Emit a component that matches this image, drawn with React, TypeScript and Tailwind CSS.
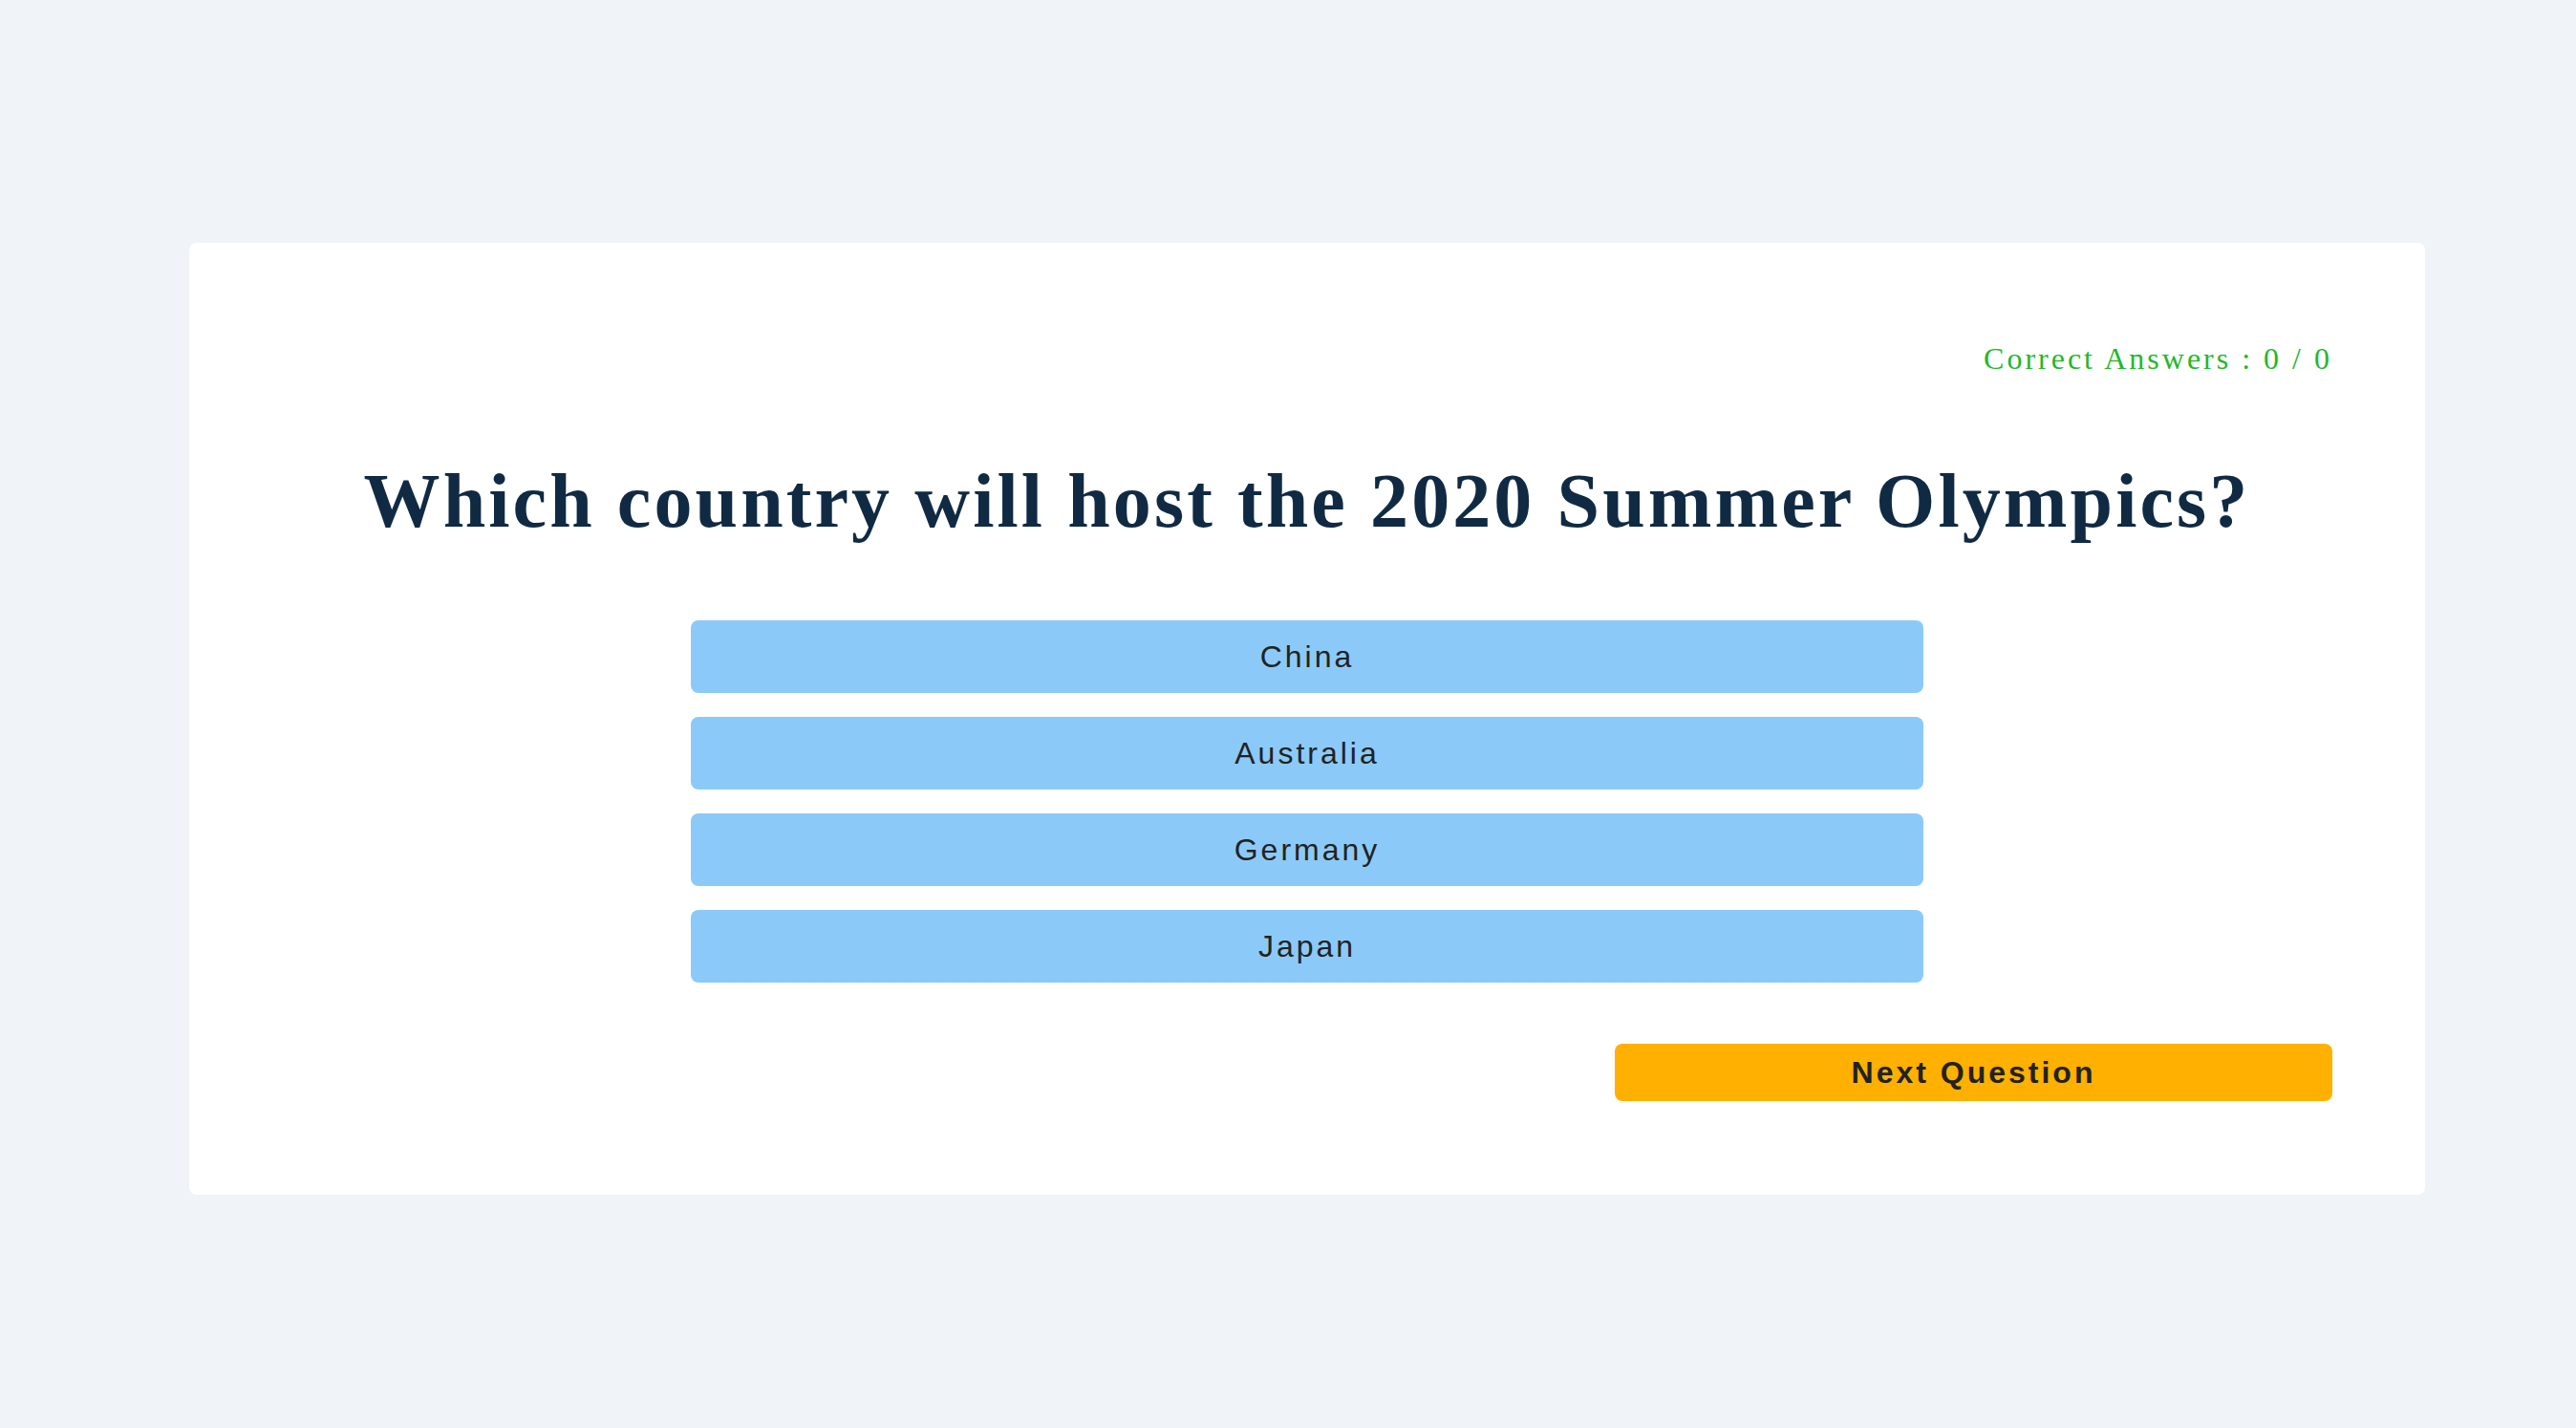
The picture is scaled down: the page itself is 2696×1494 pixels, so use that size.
const answers = ['China', 'Australia', 'Germany', 'Japan']

export default function App() {
  return (
    <div className="min-h-screen bg-[#f0f4f8] pt-[254px] pl-[198px]">
      <div className="w-[2340px] rounded-lg bg-white px-[97px] pt-[97px] pb-[98px]">
        <p className="text-right font-['Liberation_Serif',serif] text-[32px] tracking-[3px] text-[#22b82a]">
          Correct Answers : 0 / 0
        </p>

        <h1 className="mt-[79px] text-center font-['Liberation_Serif',serif] text-[80px] font-bold leading-[92px] tracking-[3.1px] text-[#102a43]">
          Which country will host the 2020 Summer Olympics?
        </h1>

        <div className="mx-auto mt-[79px] flex w-[1290px] flex-col gap-[25px]">
          {answers.map((a) => (
            <button
              key={a}
              className="h-[76px] rounded-lg bg-[#8bcaf8] font-['Liberation_Sans',sans-serif] text-[32px] tracking-[3px] text-[#222]"
            >
              {a}
            </button>
          ))}
        </div>

        <div className="mt-[64px] flex justify-end">
          <button className="h-[60px] w-[751px] rounded-lg bg-[#ffb000] font-['Liberation_Sans',sans-serif] text-[32px] font-bold tracking-[3px] text-[#222]">
            Next Question
          </button>
        </div>
      </div>
    </div>
  )
}
